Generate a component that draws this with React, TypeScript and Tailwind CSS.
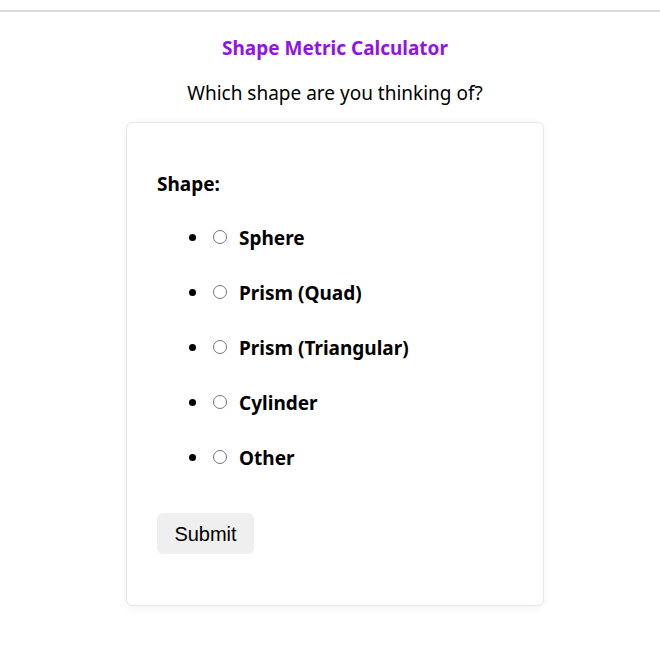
import React from "react";

const shapes = ["Sphere", "Prism (Quad)", "Prism (Triangular)", "Cylinder", "Other"];

export default function App() {
  return (
    <div className="min-h-[647px] bg-white font-['Noto_Sans',sans-serif] text-black">
      <div className="h-[10px]" />
      <div className="h-[2px] bg-[#dcdcdc]" />
      <div className="pl-[10px] flex flex-col items-center">
        <div className="mt-[24px] text-[19px] leading-[25px] font-bold text-[#9013ec]">
          Shape Metric Calculator
        </div>
        <div className="mt-[20px] text-[19px] leading-[25px]">Which shape are you thinking of?</div>
        <form className="mt-[16px] w-[418px] rounded-md border border-[#e6e6e6] bg-white px-[30px] pt-[49px] pb-[51px] shadow-[0_2px_10px_rgba(0,0,0,0.05)]">
          <div className="text-[19px] leading-[25px] font-bold">Shape:</div>
          <ul className="mt-[28px] list-disc pl-[52px] flex flex-col gap-[30px]">
            {shapes.map((s) => (
              <li key={s} className="h-[25px] text-[19px] leading-[25px] font-bold">
                <label className="ml-[4px] flex h-[25px] items-center">
                  <input type="radio" name="shape" className="w-[14px] h-[14px] mr-[12px] -mt-[3px]" />
                  <span>{s}</span>
                </label>
              </li>
            ))}
          </ul>
          <button
            type="button"
            className="mt-[43px] h-[41px] w-[97px] rounded-md bg-[#efefef] font-['Liberation_Sans',sans-serif] text-[20px] text-black"
          >
            Submit
          </button>
        </form>
      </div>
    </div>
  );
}
